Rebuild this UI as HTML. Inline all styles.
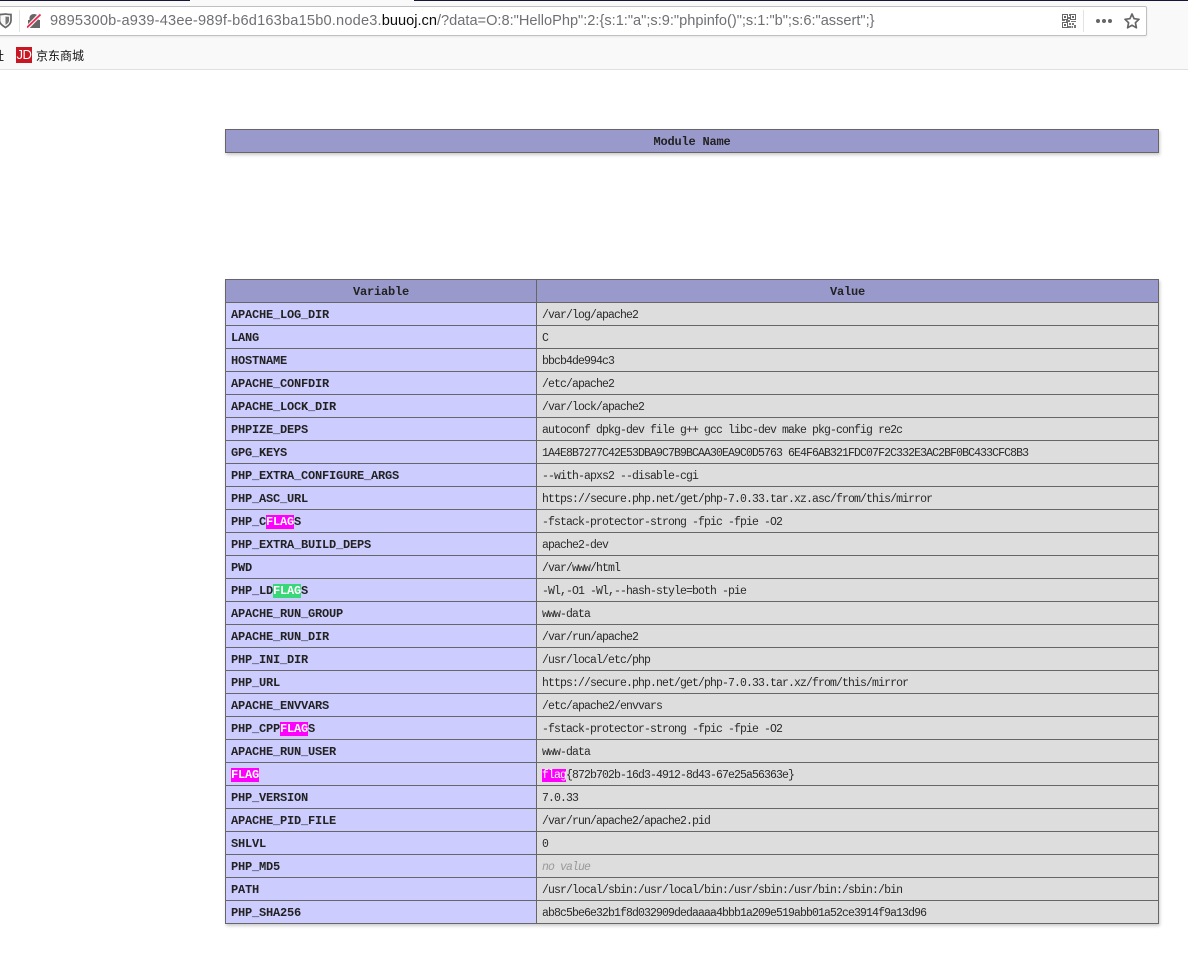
<!DOCTYPE html>
<html lang="zh"><head><meta charset="utf-8"><title>phpinfo</title>
<style>
html,body{margin:0;padding:0;background:#fff;}
body{width:1188px;height:960px;overflow:hidden;position:relative;}
.top{position:absolute;left:0;top:0;width:1188px;height:69px;background:#f9f9fa;border-bottom:1px solid #e0e0e1;}
.dk{position:absolute;top:0;height:1px;background:#16163a;}
.box{position:absolute;left:-6px;top:6px;width:1151px;height:28px;background:#fff;border:1px solid #c0c0c2;border-radius:2px;box-shadow:0 1px 2px rgba(0,0,0,.08);}
.url{position:absolute;left:50px;top:11px;font:14.6px/20px "Liberation Sans","Noto Sans CJK SC",sans-serif;color:#6f7074;white-space:nowrap;}
.url span{letter-spacing:.186px;}
.url b{font-weight:400;color:#0c0c0d;}
.bm{position:absolute;left:36px;top:47px;font:12px/17px "Noto Sans CJK SC","Liberation Sans",sans-serif;color:#111;white-space:nowrap;}
.jd{position:absolute;left:16px;top:47px;width:16px;height:16px;background:#c81623;color:#fff;font:13px/16px "Liberation Sans",sans-serif;text-align:center;letter-spacing:-.5px;}
.cut{position:absolute;left:-8px;top:47px;font:12px/17px "Noto Sans CJK SC",sans-serif;color:#111;}
table{position:absolute;left:225px;width:934px;table-layout:fixed;border-collapse:collapse;box-shadow:1px 2px 3px #ccc;font:12px/14px "Liberation Mono","Noto Serif CJK SC",monospace;letter-spacing:-.2px;color:#222;}
td,th{border:1px solid #666;height:22px;padding:1px 5px 0;box-sizing:border-box;white-space:nowrap;overflow:hidden;vertical-align:middle;}
tr{height:23px;}
th{background:#99c;font-weight:700;text-align:center;}
td.e{background:#ccf;font-weight:700;width:311px;}
td.v{background:#ddd;font-size:11.5px;letter-spacing:-.9px;color:#2a2a2a;padding-top:3px;}
i{color:#999;}
.m{background:#f0f;color:#fff;}
.g{background:#38d878;color:#fff;}
</style></head><body>
<div class="top"></div>
<div class="dk" style="left:0;width:190px"></div>
<div class="dk" style="left:414px;width:774px"></div>
<div class="box"></div>
<svg style="position:absolute;left:0;top:13px" width="12" height="16" viewBox="0 0 12 16"><path d="M-.5 1.500C2 1.500 4 1.200 5.500 1C7 1.200 9 1.500 11 1.500V7.500C11 10.500 8.500 12.800 5.500 14.500C2.500 12.800 -.5 10.500 -.5 7.500Z" fill="#f9f9fa" stroke="#666" stroke-width="1.700"/><path d="M5.500 3.500C7 3.700 7.800 3.800 9 3.800V7.500C9 9.300 7.500 10.800 5.500 12Z" fill="#777"/></svg>
<div style="position:absolute;left:19px;top:10px;width:1px;height:22px;background:#e2e2e3"></div>
<svg style="position:absolute;left:27px;top:13px" width="14" height="16" viewBox="0 0 14 16"><path d="M1 7H2.500V5C2.500 2.500 4.500 1 7 1S11.500 2.500 11.500 5V7H13V15H1Z" fill="#666"/><path d="M0 15L13.500 1" stroke="#f9f9fa" stroke-width="4"/><path d="M0 14.500L13.500 1.500" stroke="#f0274e" stroke-width="1.800"/></svg>
<div class="url"><span>9895300b-a939-43ee-989f-b6d163ba15b0.node3.</span><b>buuoj.cn</b>/?data=O:8:"HelloPhp":2:{s:1:"a";s:9:"phpinfo()";s:1:"b";s:6:"assert";}</div>
<svg style="position:absolute;left:1062px;top:14px" width="14" height="14" viewBox="0 0 14 14" fill="none" stroke="#666"><rect x=".5" y=".5" width="5" height="5"/><rect x="8.500" y=".5" width="5" height="5"/><rect x=".5" y="8.500" width="5" height="5"/><path d="M2 2h2v2H2zM10 2h2v2h-2zM2 10h2v2H2z" fill="#666" stroke="none"/><path d="M7 0h1v2H7zM6 3h2v2H6zM0 6h3v1H0zM4 6h4v2H4zM9 7h5v1H9zM7 9h2v2H7zM10 9h2v2h-2zM12 11h2v3h-2zM6 12h3v2H6zM9.500 12h1.500v2H9.500z" fill="#777" stroke="none"/></svg>
<div style="position:absolute;left:1083px;top:10px;width:1px;height:22px;background:#e2e2e3"></div>
<svg style="position:absolute;left:1095px;top:18px" width="18" height="6" viewBox="0 0 18 6" fill="#666"><circle cx="3" cy="3" r="2"/><circle cx="9" cy="3" r="2"/><circle cx="15" cy="3" r="2"/></svg>
<svg style="position:absolute;left:1123px;top:12px" width="18" height="18" viewBox="0 0 18 18"><path d="M9 2L11.100 6.700L16 7.300L12.400 10.700L13.400 15.800L9 13.200L4.600 15.800L5.600 10.700L2 7.300L6.900 6.700Z" fill="none" stroke="#666" stroke-width="1.700" stroke-linejoin="round"/></svg>
<div class="cut">址</div>
<div class="jd">JD</div>
<div class="bm">京东商城</div>

<table style="top:129px"><tr><th>Module Name</th></tr></table>

<table style="top:279px">
<colgroup><col style="width:311px"><col></colgroup>
<tr><th>Variable</th><th>Value</th></tr>
<tr><td class="e">APACHE_LOG_DIR</td><td class="v">/var/log/apache2</td></tr>
<tr><td class="e">LANG</td><td class="v">C</td></tr>
<tr><td class="e">HOSTNAME</td><td class="v">bbcb4de994c3</td></tr>
<tr><td class="e">APACHE_CONFDIR</td><td class="v">/etc/apache2</td></tr>
<tr><td class="e">APACHE_LOCK_DIR</td><td class="v">/var/lock/apache2</td></tr>
<tr><td class="e">PHPIZE_DEPS</td><td class="v">autoconf dpkg-dev file g++ gcc libc-dev make pkg-config re2c</td></tr>
<tr><td class="e">GPG_KEYS</td><td class="v">1A4E8B7277C42E53DBA9C7B9BCAA30EA9C0D5763 6E4F6AB321FDC07F2C332E3AC2BF0BC433CFC8B3</td></tr>
<tr><td class="e">PHP_EXTRA_CONFIGURE_ARGS</td><td class="v">--with-apxs2 --disable-cgi</td></tr>
<tr><td class="e">PHP_ASC_URL</td><td class="v">https://secure.php.net/get/php-7.0.33.tar.xz.asc/from/this/mirror</td></tr>
<tr><td class="e">PHP_C<span class="m">FLAG</span>S</td><td class="v">-fstack-protector-strong -fpic -fpie -O2</td></tr>
<tr><td class="e">PHP_EXTRA_BUILD_DEPS</td><td class="v">apache2-dev</td></tr>
<tr><td class="e">PWD</td><td class="v">/var/www/html</td></tr>
<tr><td class="e">PHP_LD<span class="g">FLAG</span>S</td><td class="v">-Wl,-O1 -Wl,--hash-style=both -pie</td></tr>
<tr><td class="e">APACHE_RUN_GROUP</td><td class="v">www-data</td></tr>
<tr><td class="e">APACHE_RUN_DIR</td><td class="v">/var/run/apache2</td></tr>
<tr><td class="e">PHP_INI_DIR</td><td class="v">/usr/local/etc/php</td></tr>
<tr><td class="e">PHP_URL</td><td class="v">https://secure.php.net/get/php-7.0.33.tar.xz/from/this/mirror</td></tr>
<tr><td class="e">APACHE_ENVVARS</td><td class="v">/etc/apache2/envvars</td></tr>
<tr><td class="e">PHP_CPP<span class="m">FLAG</span>S</td><td class="v">-fstack-protector-strong -fpic -fpie -O2</td></tr>
<tr><td class="e">APACHE_RUN_USER</td><td class="v">www-data</td></tr>
<tr><td class="e"><span class="m">FLAG</span></td><td class="v"><span class="m">flag</span>{872b702b-16d3-4912-8d43-67e25a56363e}</td></tr>
<tr><td class="e">PHP_VERSION</td><td class="v">7.0.33</td></tr>
<tr><td class="e">APACHE_PID_FILE</td><td class="v">/var/run/apache2/apache2.pid</td></tr>
<tr><td class="e">SHLVL</td><td class="v">0</td></tr>
<tr><td class="e">PHP_MD5</td><td class="v"><i>no value</i></td></tr>
<tr><td class="e">PATH</td><td class="v">/usr/local/sbin:/usr/local/bin:/usr/sbin:/usr/bin:/sbin:/bin</td></tr>
<tr><td class="e">PHP_SHA256</td><td class="v">ab8c5be6e32b1f8d032909dedaaaa4bbb1a209e519abb01a52ce3914f9a13d96</td></tr>
</table>
</body></html>
